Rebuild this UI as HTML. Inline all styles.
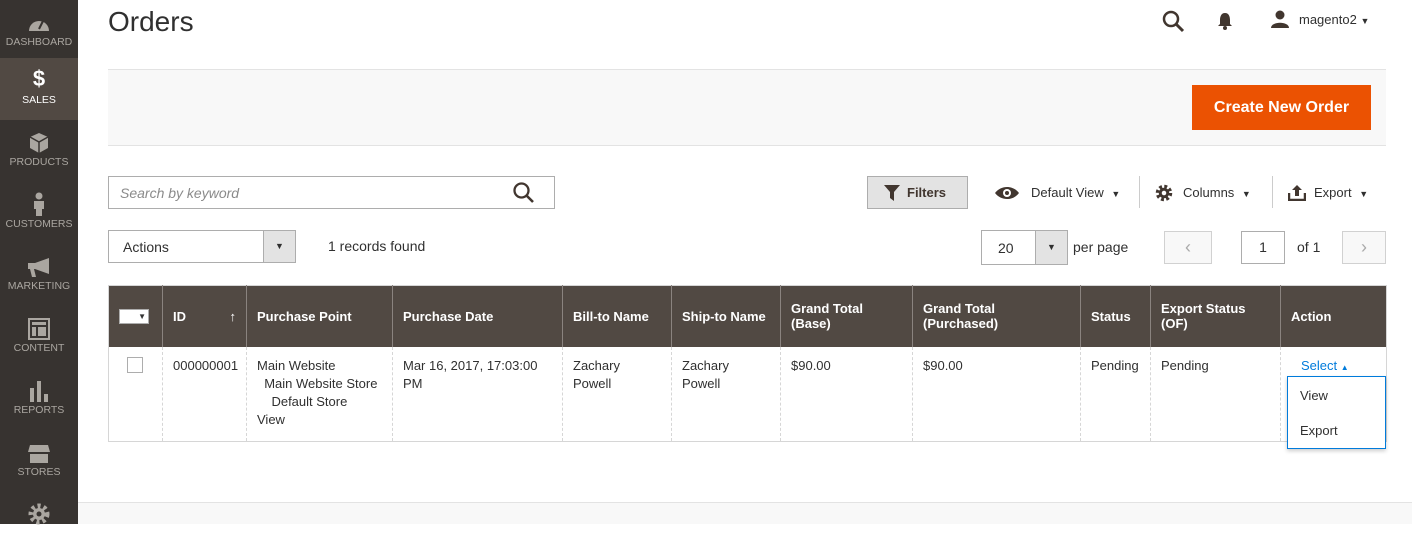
<!DOCTYPE html>
<html><head><style>
*{box-sizing:border-box;margin:0;padding:0}
body{width:1412px;height:524px;overflow:hidden;font-family:"Liberation Sans",sans-serif;background:#fff;color:#303030;position:relative;font-size:13px}
.sb{position:absolute;left:0;top:0;width:78px;height:524px;background:#373330}
.it{position:absolute;left:0;width:78px;height:62px;text-align:center;color:#aaa6a0;font-size:10.5px}
.it .ic{height:24px;margin-top:10px;display:flex;justify-content:center;align-items:flex-end}
.it span{display:block;margin-top:2px}
.abs{position:absolute}
.btn{position:absolute;left:1192px;top:85px;width:179px;height:45px;background:#eb5202;color:#fff;font-size:16px;font-weight:bold;text-align:center;line-height:45px}
th{background:#514943;color:#fff;font-weight:bold;text-align:left;font-size:13px;padding:0 10px;height:61px;border-left:1px solid #8a837f;overflow:hidden}
td{vertical-align:top;padding:10px 10px;font-size:13px;line-height:18px;border-left:1px dashed #d6d6d6;height:95px;overflow:visible;white-space:nowrap}
table{border-collapse:collapse;table-layout:fixed;position:absolute;left:108px;top:285px;width:1278px;border:1px solid #d6d6d6}
</style></head><body>
<div class="sb">
 <div class="it" style="top:0"><div class="ic" style="margin-top:8px"><svg width="22" height="18" viewBox="0 0 22 18"><path d="M1 17A10 10 0 0 1 21 17Z" fill="#aaa6a0"/><path d="M11 15L15 7" stroke="#373330" stroke-width="2"/></svg></div><span style="margin-top:4px">DASHBOARD</span></div>
 <div class="it" style="top:58px;background:#514943;color:#fff"><div class="ic"><b style="font-size:22px;color:#fff">$</b></div><span>SALES</span></div>
 <div class="it" style="top:120px"><div class="ic"><svg width="20" height="22"><path d="M10 1L19 5V16L10 21L1 16V5Z" fill="#aaa6a0"/><path d="M1 5L10 10L19 5M10 10V21" stroke="#373330" stroke-width="1.5" fill="none"/></svg></div><span>PRODUCTS</span></div>
 <div class="it" style="top:182px"><div class="ic"><svg width="12" height="24"><circle cx="6" cy="4" r="3.5" fill="#aaa6a0"/><path d="M1 9H11V17H9V24H3V17H1Z" fill="#aaa6a0"/></svg></div><span>CUSTOMERS</span></div>
 <div class="it" style="top:244px"><div class="ic"><svg width="24" height="20"><path d="M1 5H8L22 0V16L8 11H7L9 19H5L3 11H1Z" fill="#aaa6a0"/></svg></div><span>MARKETING</span></div>
 <div class="it" style="top:306px"><div class="ic"><svg width="22" height="22"><rect x="1" y="1" width="20" height="20" fill="none" stroke="#aaa6a0" stroke-width="2"/><rect x="4" y="4" width="14" height="3" fill="#aaa6a0"/><rect x="4" y="9" width="4" height="9" fill="#aaa6a0"/><rect x="10" y="9" width="8" height="9" fill="#aaa6a0"/></svg></div><span>CONTENT</span></div>
 <div class="it" style="top:368px"><div class="ic"><svg width="20" height="22"><rect x="1" y="8" width="4" height="14" fill="#aaa6a0"/><rect x="8" y="1" width="4" height="21" fill="#aaa6a0"/><rect x="15" y="14" width="4" height="8" fill="#aaa6a0"/></svg></div><span>REPORTS</span></div>
 <div class="it" style="top:430px"><div class="ic"><svg width="24" height="20"><path d="M3 1H21L23 8H1Z" fill="#aaa6a0"/><path d="M3 10H21V19H3Z" fill="#aaa6a0"/></svg></div><span>STORES</span></div>
 <div class="it" style="top:492px"><div class="ic"><svg width="24" height="24" viewBox="0 0 24 24"><circle cx="12" cy="12" r="8" fill="none" stroke="#aaa6a0" stroke-width="5" stroke-dasharray="3 3"/><circle cx="12" cy="12" r="6" fill="#aaa6a0"/><circle cx="12" cy="12" r="2.5" fill="#373330"/></svg></div></div>
</div>
<div class="abs" style="left:108px;top:6px;font-size:28px;color:#303030">Orders</div>
<svg class="abs" style="left:1162px;top:10px" width="24" height="24"><circle cx="9" cy="9" r="7" fill="none" stroke="#41362f" stroke-width="2.5"/><path d="M14 14L21 21" stroke="#41362f" stroke-width="3"/></svg>
<svg class="abs" style="left:1217px;top:12px" width="16" height="18"><path d="M8 1C4 1 3 5 3 8V12L1 14H15L13 12V8C13 5 12 1 8 1Z" fill="#41362f"/><circle cx="8" cy="16" r="2" fill="#41362f"/></svg>
<svg class="abs" style="left:1270px;top:10px" width="20" height="18"><circle cx="10" cy="5" r="4.5" fill="#41362f"/><path d="M1 18C1 11 19 11 19 18Z" fill="#41362f"/></svg>
<div class="abs" style="left:1299px;top:12px;font-size:13px">magento2 <span style="font-size:9px">▼</span></div>
<div class="abs" style="left:108px;top:69px;width:1278px;height:77px;background:#f8f8f8;border-top:1px solid #e3e3e3;border-bottom:1px solid #e3e3e3"></div>
<div class="btn">Create New Order</div>
<div class="abs" style="left:108px;top:176px;width:447px;height:33px;border:1px solid #adadad;padding:8px 11px;font-style:italic;color:#8a8a8a;font-size:14px">Search by keyword</div>
<svg class="abs" style="left:512px;top:181px" width="24" height="24"><circle cx="9.5" cy="9.5" r="7" fill="none" stroke="#41362f" stroke-width="2.3"/><path d="M14.5 14.5L21 21" stroke="#41362f" stroke-width="2.6"/></svg>
<div class="abs" style="left:867px;top:176px;width:101px;height:33px;background:#e3e3e3;border:1px solid #adadad;font-weight:bold;font-size:13px;line-height:31px;padding-left:39px;color:#41362f">Filters</div>
<svg class="abs" style="left:884px;top:185px" width="16" height="16"><path d="M0 0H16L10 7V16L6 13V7Z" fill="#41362f"/></svg>
<svg class="abs" style="left:994px;top:185px" width="26" height="16"><path d="M1 8C7 0 19 0 25 8C19 16 7 16 1 8Z" fill="#41362f"/><circle cx="13" cy="8" r="4" fill="#fff"/><circle cx="13" cy="8" r="2" fill="#41362f"/></svg>
<div class="abs" style="left:1031px;top:185px;font-size:13px">Default View <span style="font-size:9px;margin-left:4px">▼</span></div>
<div class="abs" style="left:1139px;top:176px;width:1px;height:32px;background:#ccc"></div>
<svg class="abs" style="left:1155px;top:184px" width="18" height="18" viewBox="0 0 24 24"><circle cx="12" cy="12" r="8" fill="none" stroke="#41362f" stroke-width="6" stroke-dasharray="3.5 2.8"/><circle cx="12" cy="12" r="7" fill="#41362f"/><circle cx="12" cy="12" r="3" fill="#fff"/></svg>
<div class="abs" style="left:1183px;top:185px;font-size:13px">Columns <span style="font-size:9px;margin-left:4px">▼</span></div>
<div class="abs" style="left:1272px;top:176px;width:1px;height:32px;background:#ccc"></div>
<svg class="abs" style="left:1288px;top:184px" width="18" height="17"><path d="M1 9V16H17V9" stroke="#41362f" stroke-width="2.5" fill="none"/><path d="M9 1L4 6H7V12H11V6H14Z" fill="#41362f"/></svg>
<div class="abs" style="left:1314px;top:185px;font-size:13px">Export <span style="font-size:9px;margin-left:4px">▼</span></div>
<div class="abs" style="left:108px;top:230px;width:188px;height:33px;border:1px solid #adadad;padding:8px 14px;font-size:14px">Actions</div>
<div class="abs" style="left:263px;top:231px;width:32px;height:31px;background:#e3e3e3;border-left:1px solid #adadad;text-align:center;line-height:31px;font-size:9px">▼</div>
<div class="abs" style="left:328px;top:238px;font-size:14px">1 records found</div>
<div class="abs" style="left:981px;top:230px;width:87px;height:35px;border:1px solid #adadad;padding:9px 16px;font-size:14px">20</div>
<div class="abs" style="left:1035px;top:231px;width:32px;height:33px;background:#e3e3e3;border-left:1px solid #adadad;text-align:center;line-height:33px;font-size:9px">▼</div>
<div class="abs" style="left:1073px;top:239px;font-size:14px">per page</div>
<div class="abs" style="left:1164px;top:231px;width:48px;height:33px;background:#f8f8f8;border:1px solid #d1d1d1;text-align:center;line-height:31px;color:#aaa;font-size:18px">‹</div>
<div class="abs" style="left:1241px;top:231px;width:44px;height:33px;border:1px solid #adadad;text-align:center;line-height:31px;font-size:14px">1</div>
<div class="abs" style="left:1297px;top:239px;font-size:14px">of 1</div>
<div class="abs" style="left:1342px;top:231px;width:44px;height:33px;background:#f8f8f8;border:1px solid #d1d1d1;text-align:center;line-height:31px;color:#aaa;font-size:18px">›</div>
<table>
<colgroup><col style="width:54px"><col style="width:84px"><col style="width:146px"><col style="width:170px"><col style="width:109px"><col style="width:109px"><col style="width:132px"><col style="width:168px"><col style="width:70px"><col style="width:130px"><col style="width:106px"></colgroup>
<tr><th style="border-left:none"><span style="display:inline-block;width:30px;height:15px;background:#fff;border:1px solid #adadad;vertical-align:middle;font-size:8px;color:#333;text-align:right;padding-right:2px;line-height:13px">▼</span></th>
<th>ID <span style="float:right">↑</span></th><th>Purchase Point</th><th>Purchase Date</th><th>Bill-to Name</th><th>Ship-to Name</th><th>Grand Total<br>(Base)</th><th>Grand Total<br>(Purchased)</th><th>Status</th><th>Export Status<br>(OF)</th><th>Action</th></tr>
<tr><td style="border-left:none;padding-left:18px"><span style="display:inline-block;width:16px;height:16px;border:1px solid #adadad"></span></td>
<td>000000001</td><td>Main Website<br>&nbsp;&nbsp;Main Website Store<br>&nbsp;&nbsp;&nbsp;&nbsp;Default Store<br>View</td><td>Mar 16, 2017, 17:03:00<br>PM</td><td>Zachary<br>Powell</td><td>Zachary<br>Powell</td><td>$90.00</td><td>$90.00</td><td>Pending</td><td>Pending</td><td style="color:#007bdb;padding-left:20px">Select <span style="font-size:8px">▲</span></td></tr>
</table>
<div class="abs" style="left:1287px;top:376px;width:99px;height:73px;background:#fff;border:1px solid #007bdb;box-shadow:0 2px 4px rgba(0,0,0,.2);font-size:13px;color:#303030">
<div style="padding:11px 12px 0">View</div><div style="padding:20px 12px 0">Export</div></div>
<div class="abs" style="left:78px;top:502px;width:1334px;height:22px;background:#f8f8f8;border-top:1px solid #e3e3e3"></div>
</body></html>
